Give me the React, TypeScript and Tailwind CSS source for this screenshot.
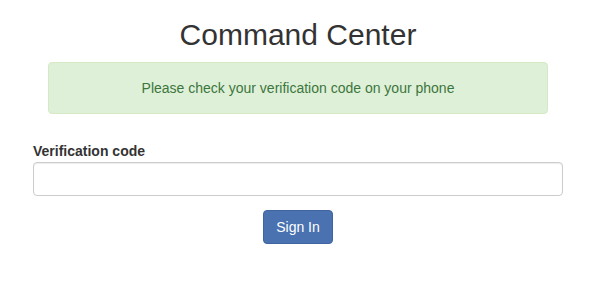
export default function App() {
  return (
    <div className="min-h-screen bg-white text-[#333] font-['Liberation_Sans',Arial,sans-serif]">
      <div className="pl-[33px] pt-[18px] pr-[36px]">
        <h1 className="text-center text-[30px] leading-[33px]">Command Center</h1>

        <div className="mx-auto mt-[11px] w-[500px] rounded border border-[#d6e9c6] bg-[#dff0d8] px-[15px] py-[15px] text-center text-sm leading-5 text-[#3c763d]">
          Please check your verification code on your phone
        </div>

        <form className="mt-[27px]" onSubmit={(e) => e.preventDefault()}>
          <label className="mb-[1px] block text-sm font-bold leading-5">Verification code</label>
          <input
            type="text"
            className="block h-[34px] w-full rounded border border-[#ccc] px-3 text-sm shadow-[inset_0_1px_1px_rgba(0,0,0,0.075)] outline-none"
          />
          <div className="mt-[14px] flex justify-center">
            <button className="h-[34px] rounded border border-[#3f64a0] bg-[#4a72b0] px-3 text-sm text-white">
              Sign In
            </button>
          </div>
        </form>
      </div>
    </div>
  );
}
